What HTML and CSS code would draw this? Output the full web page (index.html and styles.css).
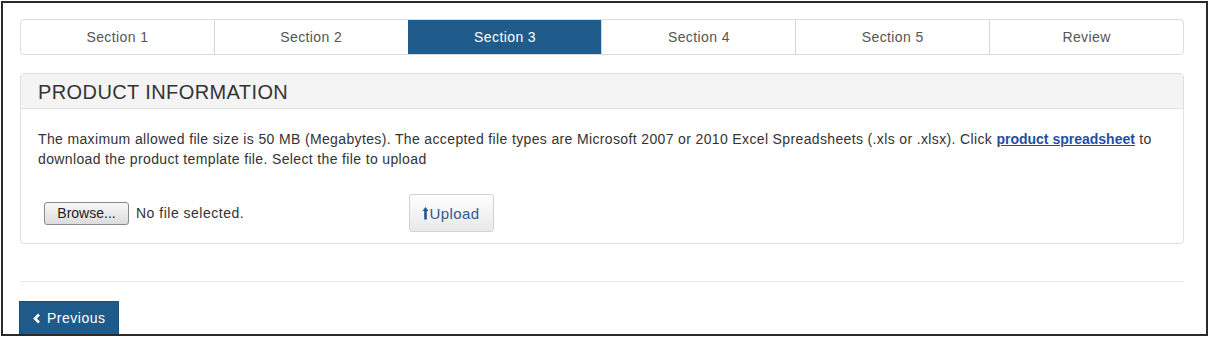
FILE: index.html
```html
<!DOCTYPE html>
<html>
<head>
<meta charset="utf-8">
<link rel="stylesheet" href="styles.css">
</head>
<body>
<div class="frame">
  <nav class="tabs">
    <div class="tab">Section 1</div>
    <div class="tab">Section 2</div>
    <div class="tab active">Section 3</div>
    <div class="tab">Section 4</div>
    <div class="tab">Section 5</div>
    <div class="tab">Review</div>
  </nav>

  <section class="panel">
    <header class="panel-heading">PRODUCT INFORMATION</header>
    <div class="panel-body">
      <p class="info">The maximum allowed file size is 50 MB (Megabytes). The accepted file types are Microsoft 2007 or 2010 Excel Spreadsheets (.xls or .xlsx). Click <a href="#" class="link">product spreadsheet</a> to download the product template file. Select the file to upload</p>
      <div class="file-row">
        <div class="file-field">
          <button class="browse" type="button">Browse...</button>
          <span class="file-name">No file selected.</span>
        </div>
        <button class="upload" type="button"><svg class="up-icon" width="7" height="14" viewBox="0 0 7 14"><path d="M3.5 1 L0.5 5 H2.2 V13.5 H4.8 V5 H6.5 Z" fill="#245592"/></svg>Upload</button>
      </div>
    </div>
  </section>

  <hr class="divider">

  <button class="prev" type="button"><svg class="chev" width="8" height="11" viewBox="0 0 8 11"><path d="M6 1.5 L2 5.5 L6 9.5" fill="none" stroke="#fff" stroke-width="2.6"/></svg>Previous</button>
</div>
</body>
</html>
```

FILE: styles.css
```css
html, body {
  margin: 0;
  padding: 0;
  background: #fff;
}

body {
  font-family: "Liberation Sans", Arial, sans-serif;
  color: #333;
}

.frame {
  box-sizing: border-box;
  width: 1207px;
  height: 335px;
  margin: 1px 0 0 1px;
  border: 2px solid #2a2a2a;
  padding: 16px 0 0 17px;
  overflow: hidden;
}

.tabs {
  display: flex;
  width: 1164px;
  height: 36px;
  box-sizing: border-box;
  border: 1px solid #dcdcdc;
  border-radius: 4px;
  overflow: hidden;
}

.tab {
  flex: 1;
  display: flex;
  align-items: center;
  justify-content: center;
  font-size: 14px;
  letter-spacing: 0.4px;
  color: #555;
  border-left: 1px solid #d6d6d6;
}

.tab:first-child {
  border-left: none;
}

.tab.active {
  background: #1f5c8b;
  color: #fff;
  border-left-color: #1f5c8b;
}

.panel {
  width: 1164px;
  box-sizing: border-box;
  margin-top: 18px;
  border: 1px solid #e0e0e0;
  border-radius: 4px;
  overflow: hidden;
}

.panel-heading {
  height: 35px;
  box-sizing: border-box;
  background: #f4f4f4;
  border-bottom: 1px solid #e2e2e2;
  padding: 7px 17px 0;
  font-size: 20px;
  letter-spacing: 0.4px;
  line-height: 22px;
  color: #333;
}

.panel-body {
  padding: 20px 17px 11px;
}

.info {
  margin: 0;
  font-size: 14px;
  letter-spacing: 0.36px;
  line-height: 20px;
  color: #333;
}

.link {
  color: #1f4fa0;
  font-weight: bold;
  letter-spacing: 0;
  text-decoration: underline;
}

.file-row {
  display: flex;
  align-items: center;
  margin-top: 25px;
}

.file-field {
  display: flex;
  align-items: center;
  width: 365px;
  margin-left: 6px;
}

.browse {
  width: 85px;
  height: 23px;
  padding: 0;
  border: 1px solid #8a8a8a;
  border-radius: 3px;
  background: linear-gradient(#f8f8f8, #dcdcdc);
  font-family: "Liberation Sans", Arial, sans-serif;
  font-size: 14px;
  color: #222;
}

.file-name {
  margin-left: 7px;
  font-size: 14px;
  letter-spacing: 0.5px;
  color: #333;
}

.upload {
  display: flex;
  align-items: center;
  justify-content: center;
  gap: 1px;
  width: 85px;
  height: 38px;
  padding: 0 2px 0 0;
  border: 1px solid #d2d2d2;
  border-radius: 3px;
  background: linear-gradient(#ffffff, #e8e8e8);
  font-family: "Liberation Sans", Arial, sans-serif;
  font-size: 15px;
  letter-spacing: 0.4px;
  color: #2f5a92;
}

.divider {
  width: 1164px;
  margin: 37px 0 0;
  border: none;
  border-top: 1px solid #e8e8e8;
  height: 0;
}

.prev {
  display: flex;
  align-items: center;
  gap: 6px;
  margin: 19px 0 0 -1px;
  height: 36px;
  width: 100px;
  padding: 0 0 2px 13px;
  box-sizing: border-box;
  background: #1f5b8a;
  border: 1px solid #1a4f79;
  font-family: "Liberation Sans", Arial, sans-serif;
  font-size: 14px;
  letter-spacing: 0.5px;
  color: #fff;
}
```
